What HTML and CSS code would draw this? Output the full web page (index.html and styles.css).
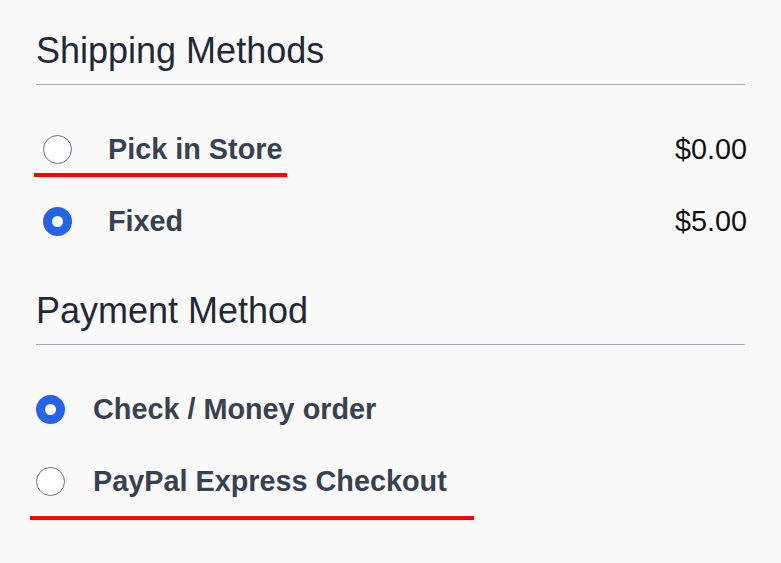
FILE: index.html
```html
<!DOCTYPE html>
<html lang="en">
<head>
<meta charset="utf-8">
<title>Checkout</title>
<link rel="stylesheet" href="styles.css">
</head>
<body>
<div class="page">
  <section class="block">
    <h2 class="title">Shipping Methods</h2>
    <div class="list">
      <div class="row ship marked">
        <span class="radio"></span>
        <span class="label">Pick in Store</span>
        <span class="price">$0.00</span>
      </div>
      <div class="row ship">
        <span class="radio checked"></span>
        <span class="label">Fixed</span>
        <span class="price">$5.00</span>
      </div>
    </div>
  </section>
  <section class="block second">
    <h2 class="title">Payment Method</h2>
    <div class="list">
      <div class="row pay">
        <span class="radio checked"></span>
        <span class="label">Check / Money order</span>
      </div>
      <div class="row pay marked">
        <span class="radio"></span>
        <span class="label">PayPal Express Checkout</span>
      </div>
    </div>
  </section>
</div>
</body>
</html>
```

FILE: styles.css
```css
html, body {
  margin: 0;
  padding: 0;
  background: #fafafa;
}

body {
  font-family: "Liberation Sans", Arial, sans-serif;
}

.page {
  padding: 29px 36px 46px 36px;
}

.title {
  margin: 0;
  font-size: 36px;
  line-height: 44px;
  font-weight: 400;
  color: #1f2937;
  padding-bottom: 11px;
  border-bottom: 1px solid #a4a9bb;
}

.second {
  margin-top: 32px;
}

.list {
  margin-top: 28px;
  display: flex;
  flex-direction: column;
}

.row {
  position: relative;
  display: flex;
  align-items: center;
  height: 72px;
}

.row.ship {
  padding-left: 7px;
}

.radio {
  flex: none;
  width: 29px;
  height: 29px;
  box-sizing: border-box;
  border-radius: 50%;
  border: 1px solid #6b7280;
  background: #ffffff;
}

.radio.checked {
  border: 9.5px solid #2563eb;
  background: #ffffff;
}

.label {
  font-size: 28.8px;
  font-weight: 700;
  color: #374151;
  line-height: 70px;
}

.ship .label {
  margin-left: 36px;
}

.pay .label {
  margin-left: 28px;
}

.price {
  margin-left: auto;
  margin-right: -2px;
  font-size: 28.8px;
  color: #111111;
  line-height: 70px;
}

.ship.marked::after {
  content: "";
  position: absolute;
  left: -2px;
  top: 60px;
  width: 253px;
  height: 4px;
  background: #ff0000;
}

.pay.marked::after {
  content: "";
  position: absolute;
  left: -6px;
  top: 71px;
  width: 444px;
  height: 4px;
  background: #ff0000;
}
```
